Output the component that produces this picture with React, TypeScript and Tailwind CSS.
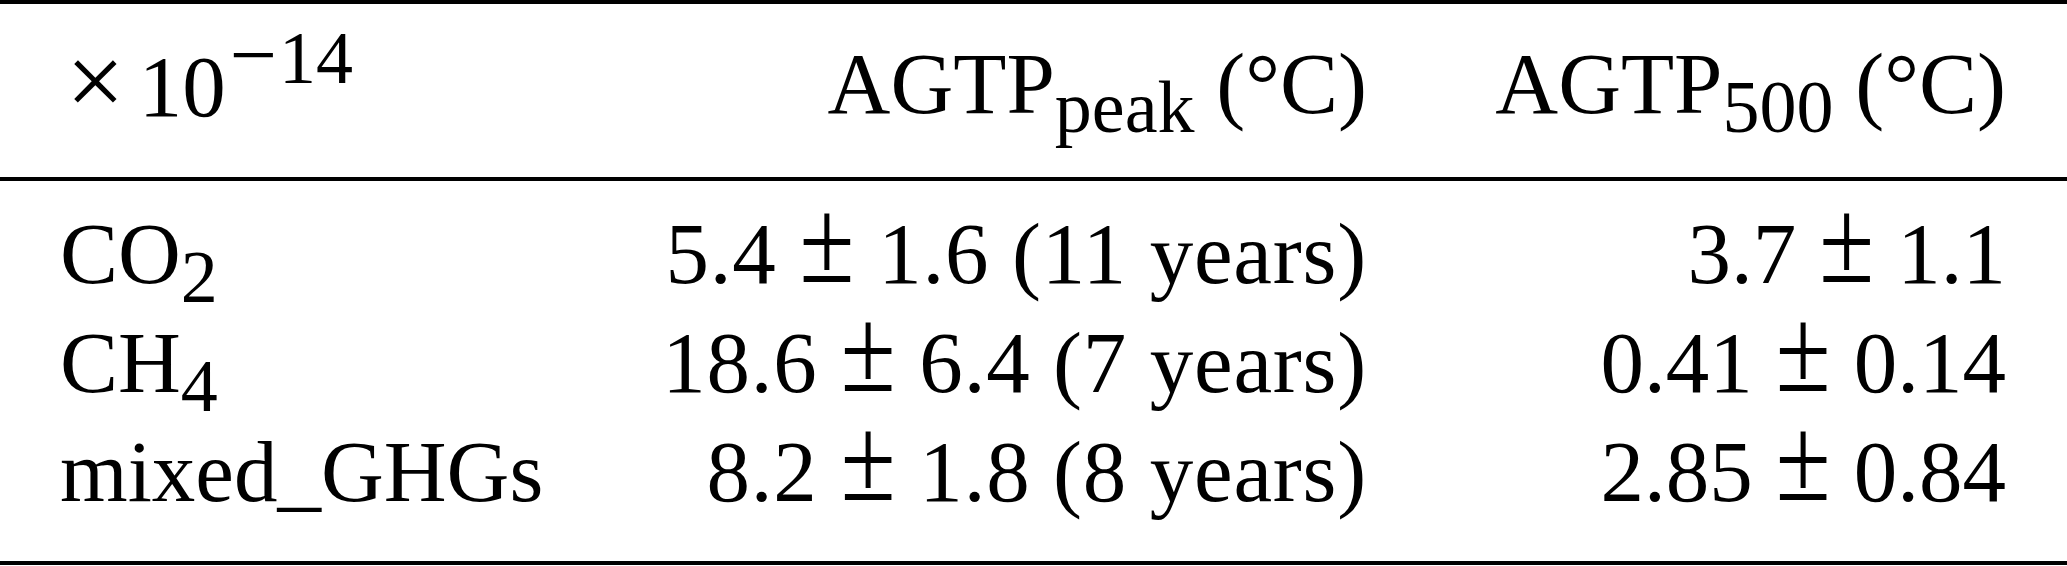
import React from 'react';

type Cell = React.ReactNode;

const Sub = ({ children }: { children: React.ReactNode }) => (
  <span className="relative top-[19px] text-[74px] leading-none">{children}</span>
);

// math-style plus/minus, taller than the text glyph
const Pm = () => (
  <span className="inline-block mx-[23px] text-[100px] leading-[60px] scale-y-[1.2] -translate-y-[8px]">±</span>
);

const rows: { name: Cell; peak: Cell; y500: Cell }[] = [
  {
    name: (
      <>
        CO<Sub>2</Sub>
      </>
    ),
    peak: (
      <>
        5.4<Pm />1.6 (11 years)
      </>
    ),
    y500: (
      <>
        3.7<Pm />1.1
      </>
    ),
  },
  {
    name: (
      <>
        CH<Sub>4</Sub>
      </>
    ),
    peak: (
      <>
        18.6<Pm />6.4 (7 years)
      </>
    ),
    y500: (
      <>
        0.41<Pm />0.14
      </>
    ),
  },
  {
    name: 'mixed_GHGs',
    peak: (
      <>
        8.2<Pm />1.8 (8 years)
      </>
    ),
    y500: (
      <>
        2.85<Pm />0.84
      </>
    ),
  },
];

function Rule() {
  return <div className="h-[4px] w-full bg-black" />;
}

export default function App() {
  return (
    <div
      className="w-[2067px] h-[566px] bg-white text-black text-[87px] whitespace-nowrap"
      style={{ fontFamily: '"Liberation Serif", "Times New Roman", serif' }}
    >
      <Rule />
      <div className="grid grid-cols-[600px_707px_639px] pl-[60px] pt-[25px] pb-[39px] leading-[109px]">
        <div className="h-[109px]">
          <span className="ml-[6px] mr-[14px] text-[104px] leading-none">×</span>10
          <span className="relative -top-[33px] text-[74px] leading-none ml-[4px]">
            <span className="text-[84px]">−</span>
            <span className="ml-[2px]">14</span>
          </span>
        </div>
        <div className="h-[109px] text-right">
          AGTP<Sub>peak</Sub> (°C)
        </div>
        <div className="h-[109px] text-right">
          AGTP<Sub>500</Sub> (°C)
        </div>
      </div>
      <Rule />
      <div className="grid grid-cols-[600px_707px_639px] pl-[60px] pt-[18px] pb-[35px] leading-[109px]">
        {rows.map((r, i) => (
          <React.Fragment key={i}>
            <div className="h-[109px]">{r.name}</div>
            <div className="h-[109px] text-right tracking-[0.8px]">{r.peak}</div>
            <div className="h-[109px] text-right">{r.y500}</div>
          </React.Fragment>
        ))}
      </div>
      <Rule />
    </div>
  );
}
